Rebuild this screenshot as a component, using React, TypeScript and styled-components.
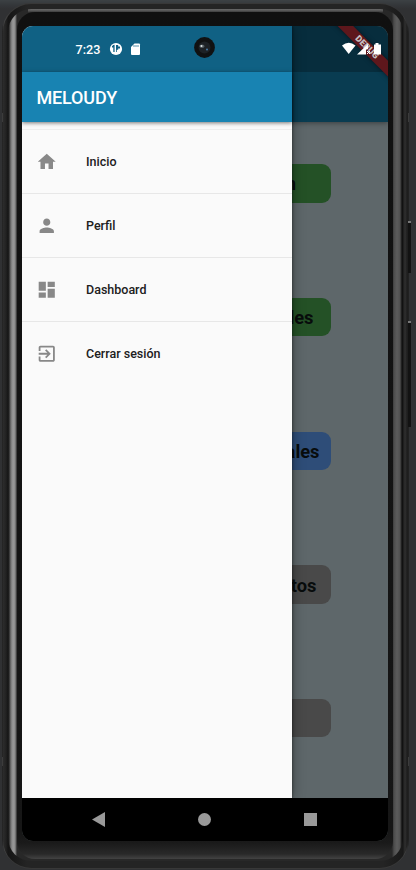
import React from "react";
import styled, { createGlobalStyle } from "styled-components";

const GlobalStyle = createGlobalStyle`
  * { box-sizing: border-box; }
  html, body { margin: 0; padding: 0; }
  body { font-family: Roboto, "Liberation Sans", sans-serif; background: #303234; }
`;

const Desk = styled.div`
  display: flex;
  width: 416px;
  height: 870px;
  overflow: hidden;
  padding: 3px 4px 1px 2px;
  background: linear-gradient(#3c4144 0, #34373a 5px, #303133 9px, #303133 100%);
`;

/* Antenna bands are painted as short strips on both edges of the shell. */
const OuterShell = styled.div`
  width: 407px;
  flex: none;
  height: 866px;
  padding: 1px;
  border-radius: 29px 31px 30px 30px;
  background:
    linear-gradient(#3c3c3c, #3c3c3c) 0 110px / 4px 9px no-repeat,
    linear-gradient(#3c3c3c, #3c3c3c) 403px 110px / 4px 9px no-repeat,
    linear-gradient(#3c3c3c, #3c3c3c) 0 754px / 4px 9px no-repeat,
    linear-gradient(#3c3c3c, #3c3c3c) 403px 754px / 4px 9px no-repeat,
    linear-gradient(90deg, #1a1a1a, #444 2px, #383838 8px, #383838 396px, #444 403px, #303030 405px, #1c1c1c);
`;

const MiddleShell = styled.div`
  height: 864px;
  padding: 5px 5px 7px;
  border-radius: 28px;
  background: linear-gradient(90deg, #2c2c2c 0, #222 3px, #151515 5px, #242424 24px, #242424 380px, #191919 400px, #303030 402px, #1e1e1e 404px);
`;

const MetalShell = styled.div`
  height: 852px;
  padding: 3px 10px 2px 9px;
  border-radius: 23px;
  background:
    linear-gradient(#686868 0, #515151 2px, #222 4px, transparent 5px) 20px 0 / 355px 6px no-repeat,
    linear-gradient(90deg, #101010 0, #292929 1px, #777 3px, #999 5px, #8c8c8c 7px, #282828 9px, #282828 384px, #4c4c4c 386px, #5c5c5c 389px, #505050 392px, #111 394px);
`;

const Bezel = styled.div`
  height: 847px;
  padding: 14px 5px 18px;
  border-radius: 18px;
  background: linear-gradient(#101010 0, #161616 819px, #1a1a1a 831px, #292929 842px, #434343 847px);
`;

const Screen = styled.div`
  position: relative;
  width: 366px;
  height: 815px;
  overflow: hidden;
  border-radius: 11px;
  display: flex;
  flex-direction: column;
  background: #5e676a;
`;

const PageTop = styled.div`
  height: 96px;
  flex: none;
  background: linear-gradient(#072d3d 0 46px, #093c51 46px);
  box-shadow: 0 1px 5px #0006;
`;

const PageBody = styled.div`
  flex: 1;
  padding: 42.3px 57px 0;
  display: flex;
  flex-direction: column;
  gap: 95.3px;
`;

const CardButton = styled.div<{ $tone: string; $inset: number }>`
  height: 38.4px;
  flex: none;
  border-radius: 9px;
  display: flex;
  align-items: center;
  justify-content: flex-end;
  padding: 1px ${(p) => p.$inset}px 0 0;
  background: ${(p) => p.$tone};
  color: #080c0c;
  font-size: 18.3px;
  font-weight: 700;
`;

const Navigation = styled.nav`
  height: 43px;
  flex: none;
  padding: 0 70px;
  display: flex;
  align-items: center;
  justify-content: space-between;
  background: #000;
  svg { fill: #999; }
`;

const Drawer = styled.aside`
  position: absolute;
  left: 0;
  top: 0;
  width: 270.4px;
  height: 772px;
  background: #fafafa;
  box-shadow: 0 0 12px #0006, 1px 0 2px #0004;
`;

const DrawerStatus = styled.div`
  height: 46px;
  padding-left: 53.5px;
  display: flex;
  align-items: center;
  background: #106184;
  color: #fff;
  font-size: 12.6px;
  font-weight: 500;
`;

const Clock = styled.span`
  width: 33.5px;
  padding-top: 1px;
`;

const DrawerTitle = styled.div`
  height: 50px;
  padding: 0 14.5px;
  display: flex;
  align-items: center;
  background: #1883b2;
  box-shadow: 0 1px 4px #0008;
  color: #fff;
  font-size: 18px;
  font-weight: 500;
  letter-spacing: -0.15px;
`;

const Menu = styled.div`
  padding-top: 7px;
  display: flex;
  flex-direction: column;
`;

const MenuRow = styled.div`
  height: 64.1px;
  padding-left: 14.2px;
  display: flex;
  align-items: center;
  gap: 28.3px;
  border-top: 1px solid #e7e7e7;
  color: #202020;
  font-size: 12.5px;
  font-weight: 500;
  &:first-child { border-color: #eeeeee; }
  svg { width: 21.5px; height: 21.5px; fill: #888; }
`;

const Ribbon = styled.div`
  position: absolute;
  left: 303px;
  top: 16px;
  width: 84px;
  height: 10.5px;
  transform: rotate(45deg);
  display: flex;
  align-items: center;
  justify-content: center;
  background: #5e171c;
  box-shadow: 0 0 5px #0008;
  color: #c7bfc0;
  font-size: 9px;
  font-weight: 900;
`;

const StatusIcons = styled.svg`
  position: absolute;
  left: 318px;
  top: 14px;
`;

const Camera = styled.svg`
  position: absolute;
  left: 171px;
  top: 10px;
`;

const KeyRail = styled.div`
  width: 3px;
  flex: none;
  margin-left: -1px;
  padding-top: 218px;
  display: flex;
  flex-direction: column;
  gap: 48px;
`;

const SideKey = styled.div<{ $height: number }>`
  height: ${(p) => p.$height}px;
  flex: none;
  background: #121212;
  border-top: 2px solid #777;
`;

const cards = [
  { text: "n", tone: "#245126", inset: 35 },
  { text: "les", tone: "#245126", inset: 17.5 },
  { text: "ales", tone: "#2e4d78", inset: 11.5 },
  { text: "tos", tone: "#494949", inset: 14.5 },
  { text: "", tone: "#494949", inset: 0 },
];

const entries = [
  { text: "Inicio", path: "M10 20v-6h4v6h5v-8h3L12 3 2 12h3v8z" },
  { text: "Perfil", path: "M12 12c2.21 0 4-1.79 4-4s-1.79-4-4-4-4 1.79-4 4 1.79 4 4 4zm0 2c-2.67 0-8 1.34-8 4v2h16v-2c0-2.66-5.33-4-8-4z" },
  { text: "Dashboard", path: "M3 13h8V3H3v10zm0 8h8v-6H3v6zm10 0h8V11h-8v10zm0-18v6h8V3h-8z" },
  { text: "Cerrar sesión", path: "M10.09 15.59 11.5 17l5-5-5-5-1.41 1.41L12.67 11H3v2h9.67l-2.58 2.59zM19 3H5c-1.11 0-2 .9-2 2v4h2V5h14v14H5v-4H3v4c0 1.1.89 2 2 2h14c1.1 0 2-.9 2-2V5c0-1.1-.9-2-2-2z" },
];

export default function App() {
  return (
    <Desk>
      <GlobalStyle />
      <OuterShell>
        <MiddleShell>
          <MetalShell>
            <Bezel>
              <Screen>
                <PageTop />
                <PageBody>
                  {cards.map((c, i) => (
                    <CardButton key={i} $tone={c.tone} $inset={c.inset}>{c.text}</CardButton>
                  ))}
                </PageBody>
                <Navigation>
                  <svg width="13" height="15"><path d="M0 7.5 13 0v15z" /></svg>
                  <svg width="13" height="13"><circle cx="6.5" cy="6.5" r="6.5" /></svg>
                  <svg width="14" height="13"><path d="M0 0h13v13H0z" /></svg>
                </Navigation>
                <Drawer>
                  <DrawerStatus>
                    <Clock>7:23</Clock>
                    <svg width="34" height="16" viewBox="0 0 34 16">
                      <circle cx="7" cy="8" r="6.1" fill="#fff" />
                      <path d="M3 5.2Q4.2 3.8 5.6 3.8V11H4.3V6.5H3zM7 4h2.2v1.4H11v2.2H9.2v1.2H7.8V11H7z" fill="#106184" />
                      <path d="M22 6l3.5-3.5H30q1 0 1 1V13q0 1-1 1h-7q-1 0-1-1z" fill="#fff" />
                      <path d="M25 4v2M27 4v2M29 4v2" stroke="#106184" strokeWidth=".7" />
                    </svg>
                  </DrawerStatus>
                  <DrawerTitle>MELOUDY</DrawerTitle>
                  <Menu>
                    {entries.map((e) => (
                      <MenuRow key={e.text}>
                        <svg viewBox="0 0 24 24"><path d={e.path} /></svg>
                        {e.text}
                      </MenuRow>
                    ))}
                  </Menu>
                </Drawer>
                <Ribbon>DEBUG</Ribbon>
                <StatusIcons width="48" height="18" fill="#fff">
                  <path d="M2 5.5Q8.7-.2 15.5 5.5L8.7 14z" />
                  <path d="M17 14.5 28 4v5h-2v5.5z" />
                  <path d="M27 11l3 3M30 11l-3 3" stroke="#fff" strokeWidth="1" />
                  <path d="M34 4.5h1.5V3h3v1.5H41v10h-7z" />
                </StatusIcons>
                <Camera width="24" height="24">
                  <circle cx="11.5" cy="11.5" r="10.4" fill="#101112" />
                  <circle cx="11.5" cy="11.5" r="6" fill="#1d2125" />
                  <ellipse cx="9" cy="10.3" rx="2.6" ry="1.8" fill="#555d62" />
                  <circle cx="8.5" cy="10" r="1" fill="#e0e5e5" />
                  <circle cx="14" cy="13.5" r=".9" fill="#4c83b4" />
                </Camera>
              </Screen>
            </Bezel>
          </MetalShell>
        </MiddleShell>
      </OuterShell>
      <KeyRail>
        <SideKey $height={52} />
        <SideKey $height={106} />
      </KeyRail>
    </Desk>
  );
}
